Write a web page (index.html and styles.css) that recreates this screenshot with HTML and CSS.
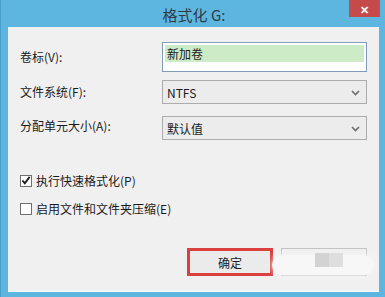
FILE: index.html
```html
<!DOCTYPE html>
<html lang="zh-CN">
<head>
    <meta charset="UTF-8">
    <title>格式化 G:</title>
    <link rel="stylesheet" href="styles.css">
</head>
<body>
    <div class="window">
        <div class="titlebar">
            <span class="title">格式化 G:</span>
            <span class="close">&#x2715;</span>
        </div>
        <div class="client">
            <div class="form">
                <label class="label">卷标(V):</label>
                <div class="textbox"><span class="sel">新加卷</span></div>

                <label class="label">文件系统(F):</label>
                <div class="select">
                    <span>NTFS</span>
                    <svg class="chev" width="9" height="6" viewBox="0 0 9 6"><path d="M1 1 L4.5 4.5 L8 1" fill="none" stroke="#6d6d6d" stroke-width="1.6"/></svg>
                </div>

                <label class="label">分配单元大小(A):</label>
                <div class="select">
                    <span>默认值</span>
                    <svg class="chev" width="9" height="6" viewBox="0 0 9 6"><path d="M1 1 L4.5 4.5 L8 1" fill="none" stroke="#6d6d6d" stroke-width="1.6"/></svg>
                </div>
            </div>

            <div class="checks">
                <div class="check">
                    <span class="box"><svg width="11" height="11" viewBox="0 0 11 11"><path d="M1.5 5.5 L4.2 8.5 L9.5 1.5" fill="none" stroke="#1e1e1e" stroke-width="2"/></svg></span>
                    执行快速格式化(P)
                </div>
                <div class="check">
                    <span class="box"></span>
                    启用文件和文件夹压缩(E)
                </div>
            </div>

            <div class="buttons">
                <button class="btn btn-ok">确定</button>
                <button class="btn btn-blur">
                    <span class="blur"></span>
                    <span class="tile t1"></span>
                    <span class="tile t2"></span>
                </button>
            </div>
        </div>
    </div>
</body>
</html>
```

FILE: styles.css
```css
* { box-sizing: border-box; }
html, body { margin: 0; padding: 0; }
body { width: 385px; height: 297px; overflow: hidden; font-family: "Noto Sans CJK SC", sans-serif; font-size: 12px; color: #1a1a1a; }

.window { width: 385px; height: 297px; background: #5db6df; border-left: 1px solid #4a9fcb; display: flex; flex-direction: column; }
.titlebar { height: 27px; position: relative; display: flex; justify-content: center; align-items: center; }
.title { font-size: 15px; color: #2f3b44; margin-left: 2px; margin-top: 1px; }
.close { position: absolute; top: 0; right: 5px; width: 31px; height: 17px; background: #c74a4a; color: #fff; font-size: 11px; font-weight: bold; display: flex; justify-content: center; align-items: center; }

.client { margin: 0 6px 5px 7px; flex: 1; background: #f0f0f0; border-bottom: 1px solid #f6f8fb; padding: 15px 12px 0 12px; }

.form { display: grid; grid-template-columns: 142px 205px; row-gap: 8px; align-items: center; }
.label { line-height: 16px; }
.textbox { height: 30px; border: 1px solid #7f9db9; background: #fff; padding: 2px 2px 0 2px; }
.textbox .sel { display: block; height: 17px; line-height: 17px; background: #cdebc7; padding-left: 2px; }
.select { height: 24px; border: 1px solid #acacac; background: #ececec; display: flex; align-items: center; justify-content: space-between; padding: 0 6px 0 4px; }
.select:last-child { margin-top: 4px; }
.chev { margin-top: 1px; }

.checks { margin-top: 34px; display: flex; flex-direction: column; gap: 15px; }
.check { display: flex; align-items: center; gap: 4px; height: 13px; }
.box { width: 12px; height: 12px; border: 1px solid #6f6f6f; background: #fff; display: flex; align-items: center; justify-content: center; }

.buttons { margin-top: 33px; display: flex; justify-content: flex-end; gap: 8px; }
.btn { width: 86px; height: 28px; font-family: inherit; font-size: 12px; color: #1a1a1a; background: #ebebeb; border: 1px solid #adadad; padding: 0; }
.btn-ok { border: 3px solid #d9403e; }
.btn-blur { background: #efefef; border-color: #c4c4c4; position: relative; }
.blur { position: absolute; left: -10px; top: 6px; width: 102px; height: 20px; background: #f7f7f7; border-radius: 10px; box-shadow: 0 0 6px #f7f7f7; }
.tile { position: absolute; top: 4px; width: 14px; height: 14px; }
.t1 { left: 33px; background: #d3d3d3; }
.t2 { left: 47px; background: #dedede; }
```
